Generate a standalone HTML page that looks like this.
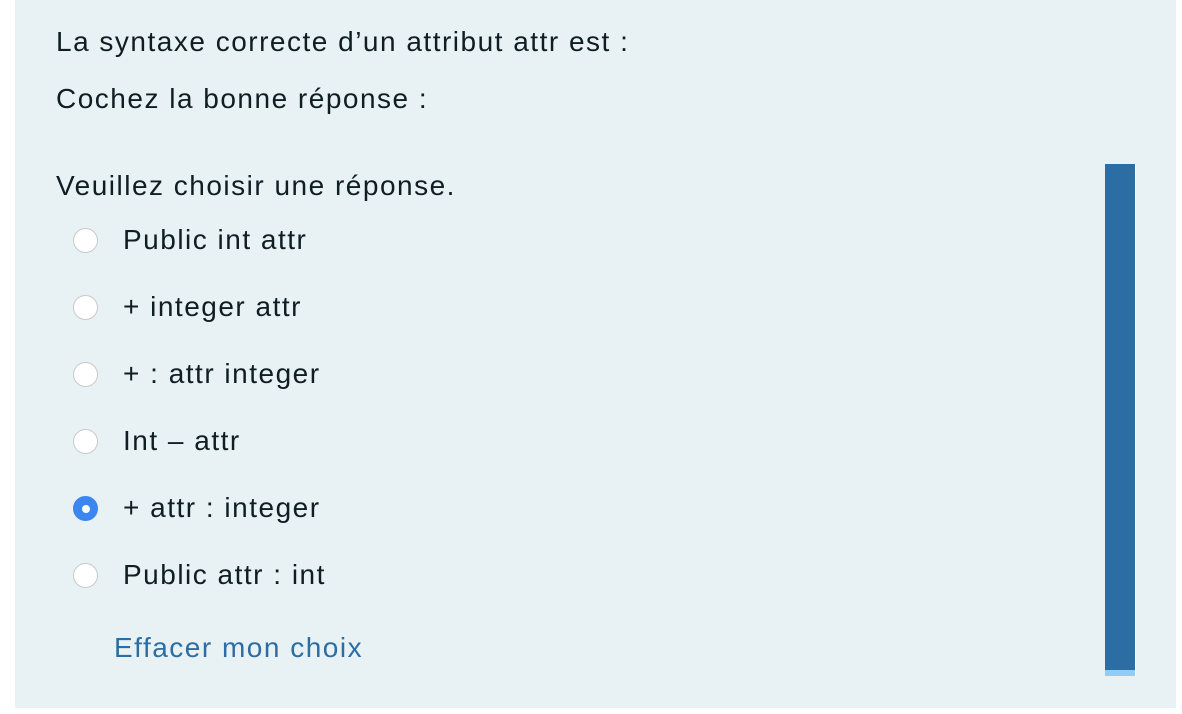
<!DOCTYPE html>
<html><head><meta charset="utf-8"><style>
body{margin:0;width:1182px;height:714px;background:#fff;position:relative;overflow:hidden;font-family:"Liberation Sans",sans-serif;color:#0e1e22}
.panel{position:absolute;left:15px;top:0;width:1161px;height:708px;background:#e8f1f4}
.t{position:absolute;font-size:28px;letter-spacing:1.5px;white-space:nowrap;line-height:30px}
.r{position:absolute;left:73px;width:23px;height:23px;border-radius:50%;background:#fff;border:1px solid #c9c9c9;box-sizing:content-box}
.r.on{background:#3b86f0;border-color:#3b86f0}
.r.on::after{content:"";position:absolute;left:7.5px;top:7.5px;width:8px;height:8px;border-radius:50%;background:#fff}
.bar{position:absolute;left:1105px;top:164px;width:30px;height:506px;background:#2c6ea3;border-right:1px solid #fff}
.bar2{position:absolute;left:1105px;top:670px;width:30px;height:6px;background:#8ecdf7;border-right:1px solid #fff}
</style></head><body>
<div class="panel"></div>
<div class="t" style="left:56px;top:27px">La syntaxe correcte d’un attribut attr est :</div>
<div class="t" style="left:56px;top:84px">Cochez la bonne réponse :</div>
<div class="t" style="left:56px;top:171px">Veuillez choisir une réponse.</div>
<div class="r" style="top:228px"></div><div class="t" style="left:123px;top:225px">Public int attr</div>
<div class="r" style="top:295px"></div><div class="t" style="left:123px;top:292px">+ integer attr</div>
<div class="r" style="top:362px"></div><div class="t" style="left:123px;top:359px">+ : attr integer</div>
<div class="r" style="top:429px"></div><div class="t" style="left:123px;top:426px">Int – attr</div>
<div class="r on" style="top:496px"></div><div class="t" style="left:123px;top:493px">+ attr : integer</div>
<div class="r" style="top:563px"></div><div class="t" style="left:123px;top:560px">Public attr : int</div>
<div class="t" style="left:114px;top:633px;color:#2c6ea3">Effacer mon choix</div>
<div class="bar"></div><div class="bar2"></div>
</body></html>
